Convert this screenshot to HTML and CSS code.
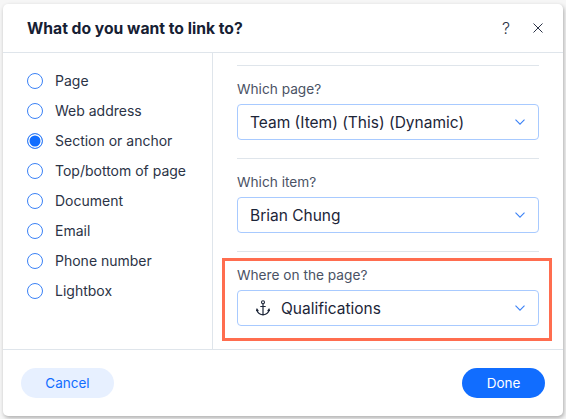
FILE: index.html
```html
<!DOCTYPE html>
<html lang="en">

<head>
    <meta charset="UTF-8">
    <meta name="viewport" content="width=device-width, initial-scale=1.0">
    <title>What do you want to link to?</title>
    <link rel="stylesheet" href="styles.css">
</head>

<body>
    <div class="dialog">
        <header class="cabecalho">
            <h1>What do you want to link to?</h1>
            <span class="ajuda">?</span>
            <svg class="fechar" width="10" height="10" viewBox="0 0 10 10">
                <path d="M.5.5l9 9M9.500.5l-9 9" fill="none" stroke="#2b3346" stroke-width="1" />
            </svg>
        </header>

        <main class="corpo">
            <ul class="opcoes">
                <li><span class="radio"></span>Page</li>
                <li><span class="radio"></span>Web address</li>
                <li><span class="radio marcado"></span>Section or anchor</li>
                <li><span class="radio"></span>Top/bottom of page</li>
                <li><span class="radio"></span>Document</li>
                <li><span class="radio"></span>Email</li>
                <li><span class="radio"></span>Phone number</li>
                <li><span class="radio"></span>Lightbox</li>
            </ul>

            <div class="campos">
                <section class="campo">
                    <label>Which page?</label>
                    <div class="select">
                        <span class="valor">Team (Item) (This) (Dynamic)</span>
                        <svg class="seta" width="10" height="6" viewBox="0 0 10 6">
                            <path d="M.5.7L5 5.200 9.500.7" fill="none" stroke="#3b82f6" stroke-width="1.1" />
                        </svg>
                    </div>
                </section>

                <section class="campo">
                    <label>Which item?</label>
                    <div class="select">
                        <span class="valor">Brian Chung</span>
                        <svg class="seta" width="10" height="6" viewBox="0 0 10 6">
                            <path d="M.5.7L5 5.200 9.500.7" fill="none" stroke="#3b82f6" stroke-width="1.1" />
                        </svg>
                    </div>
                </section>

                <section class="campo destaque">
                    <label>Where on the page?</label>
                    <div class="select">
                        <svg class="ancora" width="14" height="16" viewBox="0 0 14 16">
                            <circle cx="7" cy="2.300" r="1.500" fill="none" stroke="#1c2538" stroke-width="1.100" />
                            <path d="M7 3.800V15M4.300 6.500h5.400M1 9.500c.2 3.300 2.800 5 6 5.500 3.200-.5 5.800-2.200 6-5.500M.2 11l.8-1.800L2.300 11M11.700 11l1.300-1.800.8 1.800" fill="none" stroke="#1c2538" stroke-width="1.200" />
                        </svg>
                        <span class="valor">Qualifications</span>
                        <svg class="seta" width="10" height="6" viewBox="0 0 10 6">
                            <path d="M.5.7L5 5.200 9.500.7" fill="none" stroke="#3b82f6" stroke-width="1.1" />
                        </svg>
                    </div>
                </section>
            </div>
        </main>

        <footer class="rodape">
            <button class="botao cancelar">Cancel</button>
            <button class="botao concluir">Done</button>
        </footer>
    </div>
</body>

</html>
```

FILE: styles.css
```css
* {
    box-sizing: border-box;
}

body {
    margin: 0;
    height: 419px;
    overflow: hidden;
    padding: 4px 3px 3px;
    background: #f6f6f6;
    font-family: "Inter", "Liberation Sans", sans-serif;
    color: #1c2538;
}

.dialog {
    width: 560px;
    height: 412px;
    display: flex;
    flex-direction: column;
    background: #fff;
    border-radius: 5px;
    box-shadow: 1px 2px 4px rgba(0, 0, 0, .3);
}

.cabecalho {
    height: 49px;
    flex: none;
    display: flex;
    align-items: center;
    padding: 0 20px 0 24px;
    border-bottom: 1px solid #dfe5eb;
}

.cabecalho h1 {
    flex: 1;
    margin: 0;
    font-size: 15.700px;
    font-weight: 700;
    color: #162033;
}

.ajuda {
    font-size: 16px;
    font-weight: 300;
    color: #2b3346;
    margin-right: 23px;
}

.corpo {
    flex: 1;
    display: flex;
    min-height: 0;
}

.opcoes {
    width: 210px;
    flex: none;
    margin: 0;
    padding: 13px 0 0 24px;
    list-style: none;
    border-right: 1px solid #dfe5eb;
}

.opcoes li {
    height: 30px;
    display: flex;
    align-items: center;
    gap: 12px;
    font-size: 14px;
    line-height: 16px;
    color: #2b3346;
}

.radio {
    width: 16px;
    height: 16px;
    border: 1px solid #3b82f6;
    border-radius: 50%;
    flex: none;
}

.marcado {
    background: #116dff;
    box-shadow: inset 0 0 0 1.500px #fff;
}

.campos {
    flex: 1;
    padding: 12px 24px 0;
}

.campo {
    position: relative;
    height: 93px;
    border-top: 1px solid #dfe5eb;
    padding-top: 14px;
}

.campo label {
    display: block;
    font-size: 13.700px;
    line-height: 18px;
    color: #4a5264;
    margin-bottom: 6px;
}

.destaque::after {
    content: "";
    box-sizing: border-box;
    position: absolute;
    top: 6px;
    left: -15px;
    right: -13px;
    height: 83px;
    border: 3px solid #ff6d4f;
}

.select {
    height: 36px;
    display: flex;
    align-items: center;
    padding: 0 13px 0 12px;
    border: 1px solid #a8caff;
    border-radius: 4px;
}

.valor {
    flex: 1;
    font-size: 15.500px;
    color: #1c2538;
}

.ancora {
    margin: 0 11px 0 6px;
    flex: none;
}

.seta {
    flex: none;
}

.rodape {
    height: 67px;
    flex: none;
    display: flex;
    justify-content: space-between;
    align-items: center;
    padding: 0 18px;
    border-top: 1px solid #dfe5eb;
}

.botao {
    height: 30px;
    border: 0;
    border-radius: 15px;
    font-family: inherit;
    font-size: 13.500px;
}

.cancelar {
    width: 93px;
    background: #e7f0ff;
    color: #116dff;
}

.concluir {
    width: 83px;
    background: #116dff;
    color: #fff;
}
```
